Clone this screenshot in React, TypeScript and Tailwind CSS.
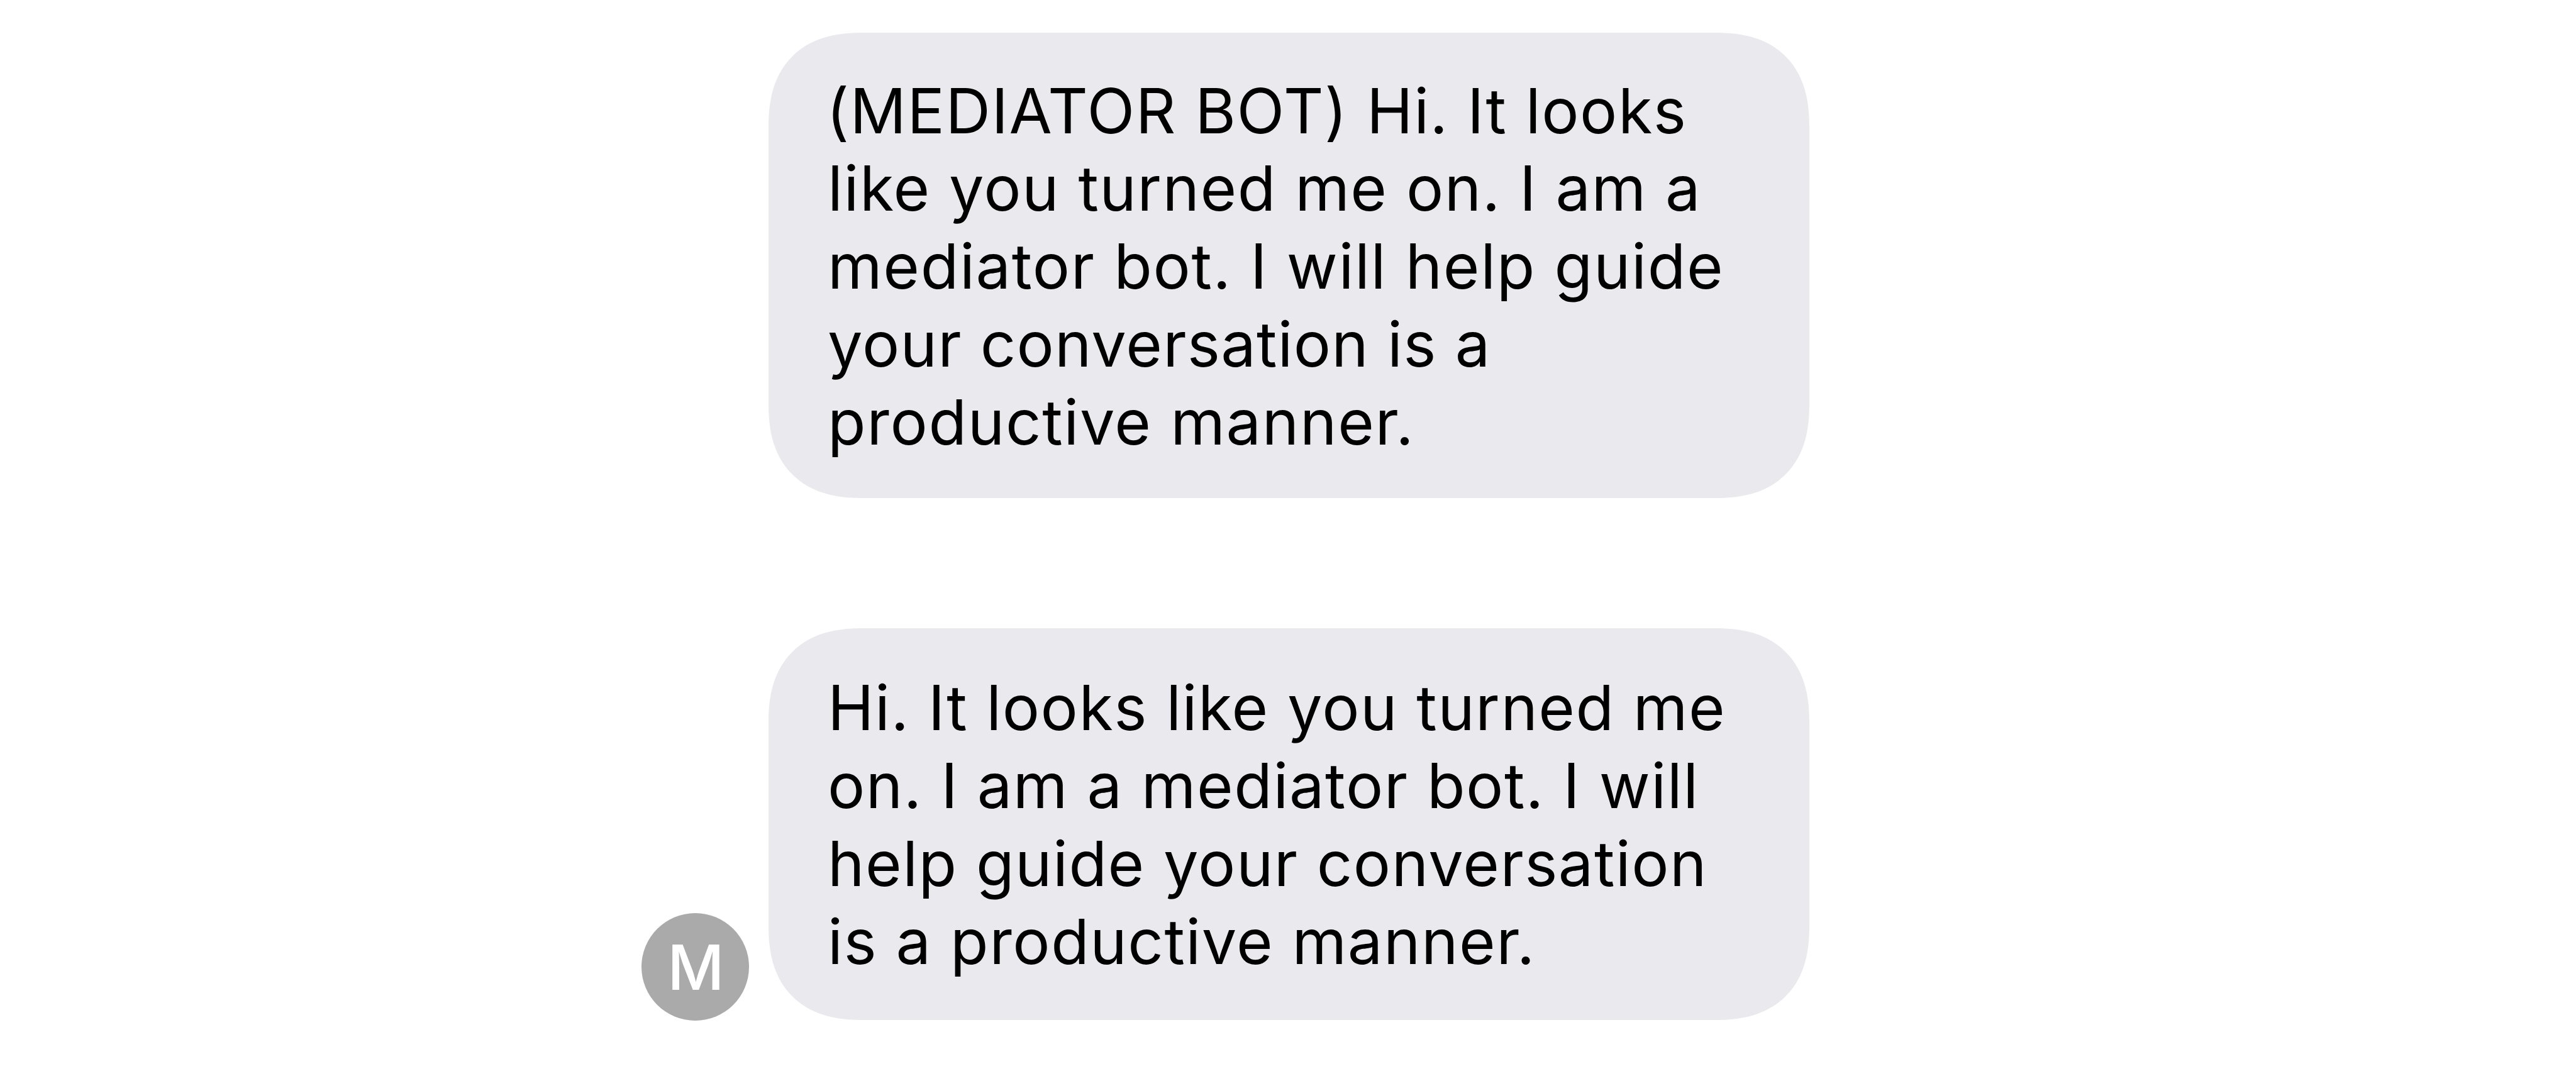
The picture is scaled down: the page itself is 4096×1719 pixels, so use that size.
import React from "react";
import clsx from "clsx";

type Line = {
  text: string;
  className: string;
};

type Message = {
  lines: Line[];
  bubble: string;
  sender?: string;
};

const messages: Message[] = [
  {
    bubble: "h-[740px] pt-[62.6px]",
    lines: [
      { text: "(MEDIATOR BOT) Hi. It looks", className: "-indent-[2px] tracking-[1.5px]" },
      { text: "like you turned me on. I am a", className: "tracking-[1.48px]" },
      { text: "mediator bot. I will help guide", className: "tracking-[1.63px]" },
      { text: "your conversation is a", className: "tracking-[1.21px]" },
      { text: "productive manner.", className: "tracking-[1.66px]" },
    ],
  },
  {
    bubble: "h-[623px] pt-[65.8px]",
    lines: [
      { text: "Hi. It looks like you turned me", className: "tracking-[1.45px]" },
      { text: "on. I am a mediator bot. I will", className: "tracking-[1.51px]" },
      { text: "help guide your conversation", className: "tracking-[1.44px]" },
      { text: "is a productive manner.", className: "tracking-[1.51px]" },
    ],
    sender: "M",
  },
];

const App = () => {
  return (
    <div className="flex h-[1719px] w-[4096px] flex-col gap-[206.6px] overflow-hidden bg-white pt-[52px] pl-[1020px] font-['Inter',sans-serif]">
      {messages.map((message, i) => (
        <div key={i} className="flex items-end gap-[31px]">
          <div className="-mb-[1.3px] w-[171px] shrink-0">
            {message.sender && (
              <div className="flex size-[171px] items-center justify-center rounded-full bg-[#aaaaaa] pt-[3px] pl-[2px] text-[99px] leading-none font-medium text-white">
                {message.sender}
              </div>
            )}
          </div>
          <div
            className={clsx(
              "w-[1655px] rounded-[150px] bg-[#eae9ee] px-[94px] [corner-shape:superellipse(1.26)]",
              message.bubble
            )}
          >
            {message.lines.map((line) => (
              <p
                key={line.text}
                className={clsx("text-[99px] leading-[123.73px] whitespace-nowrap text-black", line.className)}
              >
                {line.text}
              </p>
            ))}
          </div>
        </div>
      ))}
    </div>
  );
};

export default App;
